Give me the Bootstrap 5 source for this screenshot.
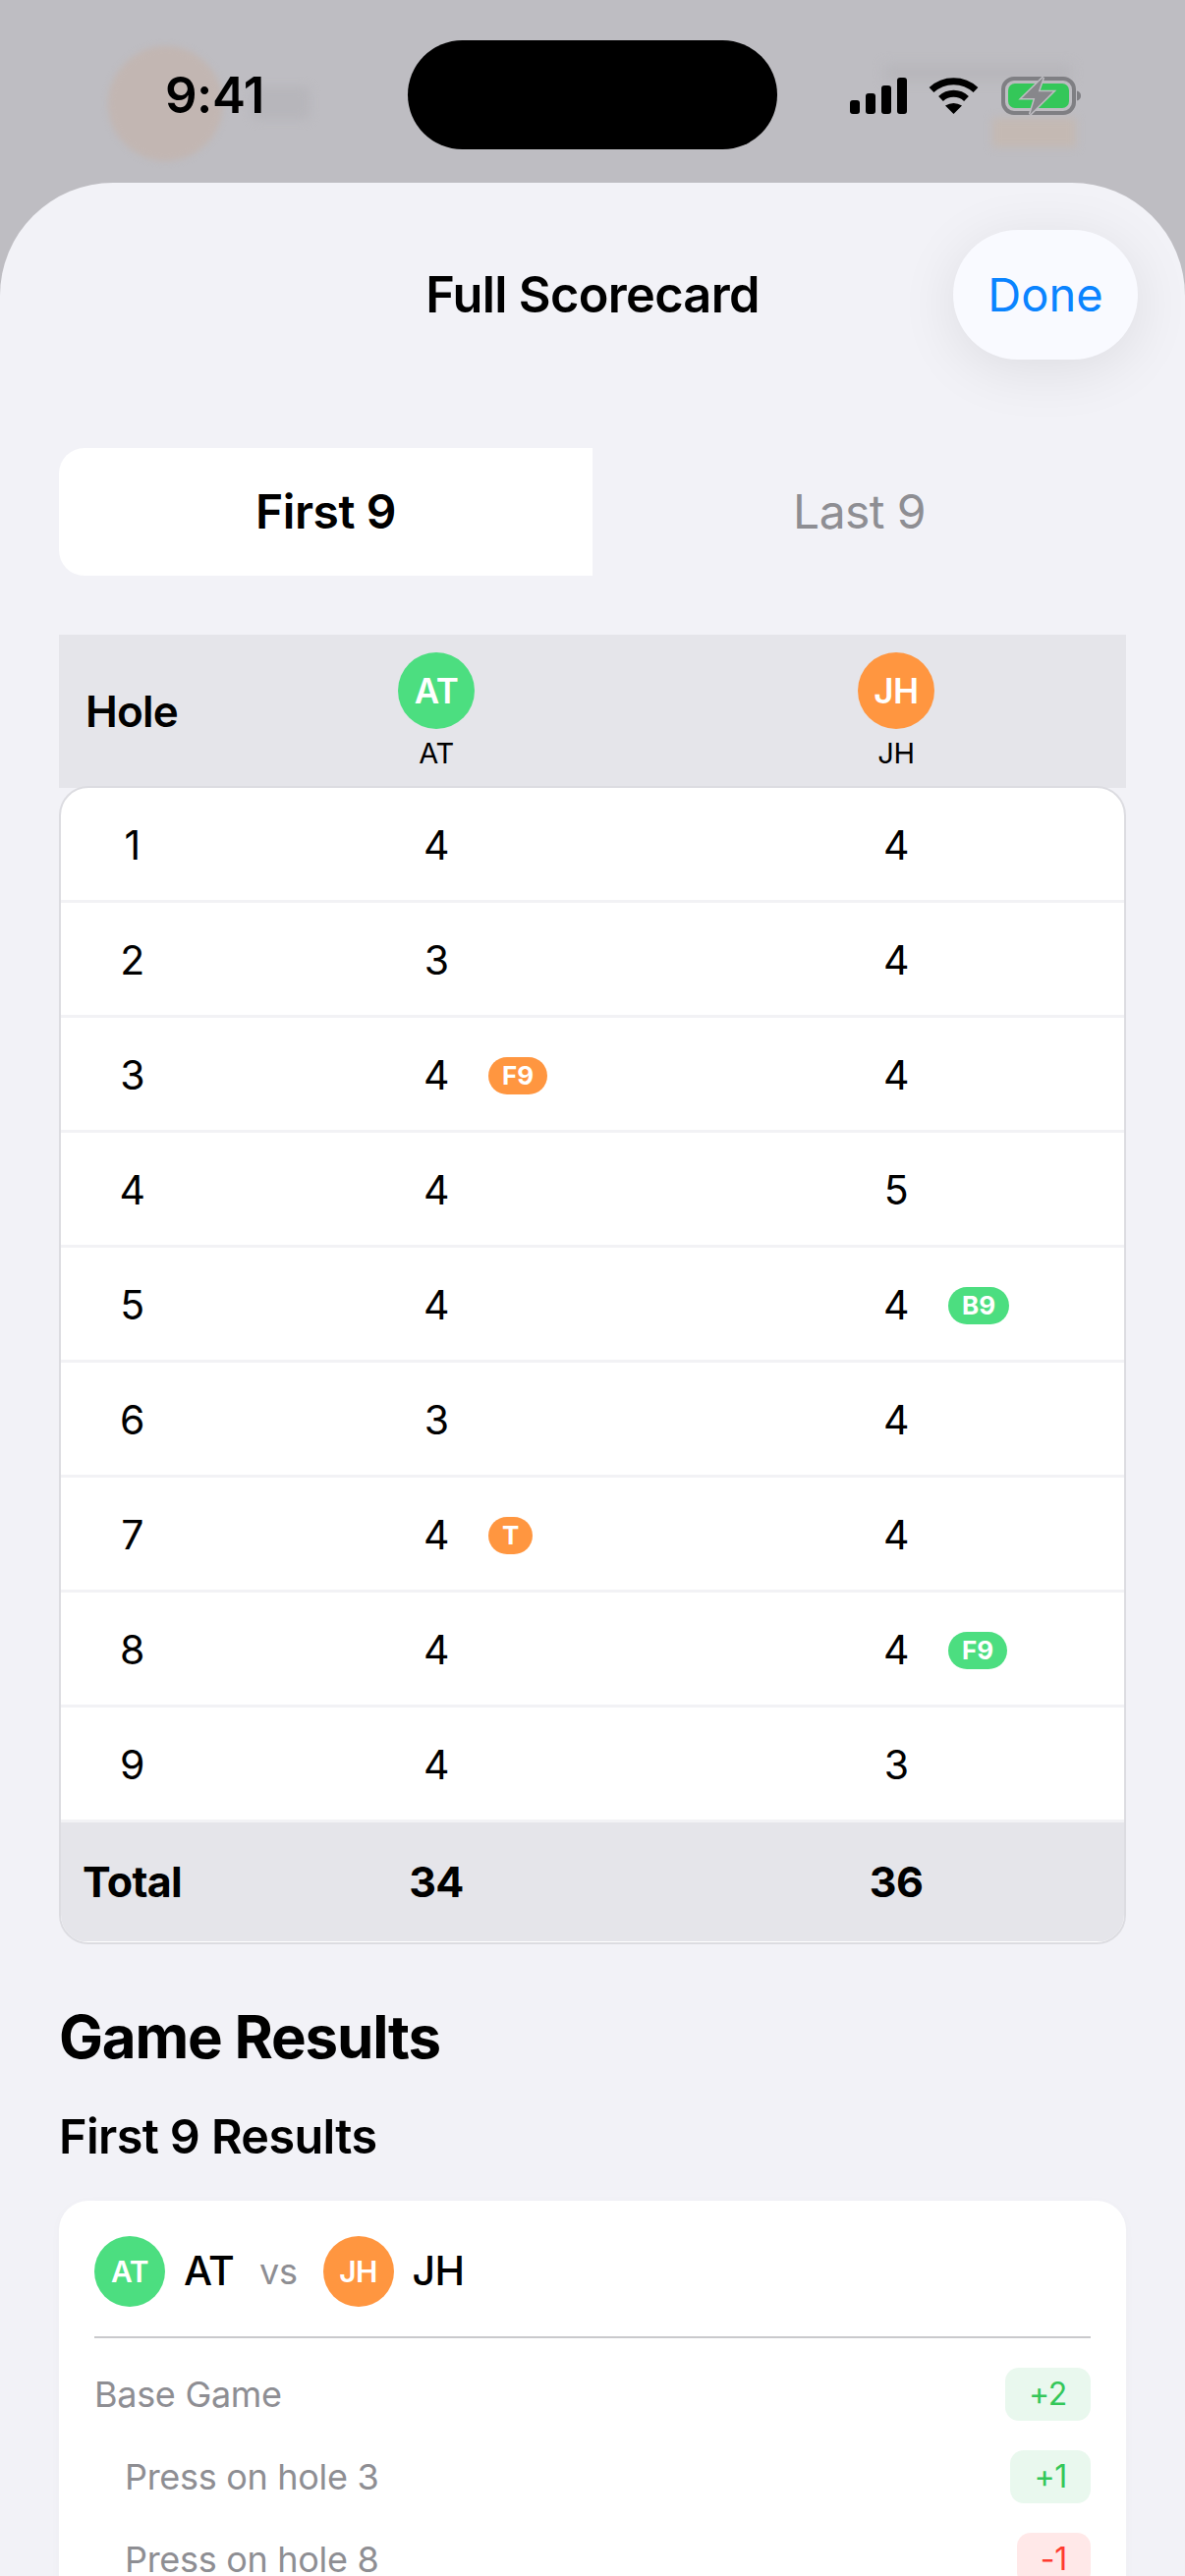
<!DOCTYPE html>
<html lang="en">
<head>
<meta charset="utf-8">
<title>Full Scorecard</title>
<link href="https://cdn.jsdelivr.net/npm/bootstrap@5.3.0/dist/css/bootstrap.min.css" rel="stylesheet">
<style>
html,body{height:2622px;overflow:hidden;background:#bebdc2;font-family:"Inter","Liberation Sans",sans-serif;color:#000}
.screen{width:1206px;height:2622px;overflow:hidden;position:relative}
.ghost{position:absolute;filter:blur(3px)}
.ghost-av{left:110px;top:47px;width:117px;height:117px;border-radius:50%;background:#c2b6b2}
.ghost-txt{left:256px;top:88px;width:60px;height:34px;background:#b7b6bb;border-radius:8px;filter:blur(5px)}
.ghost-top{left:900px;top:66px;width:190px;height:16px;background:#b7b6bb;filter:blur(6px)}
.ghost-sub{left:1010px;top:120px;width:85px;height:30px;background:#c4b9b3;filter:blur(4px)}
.status{height:186px;position:relative;z-index:1}
.time{width:415px;padding-left:168px;padding-top:72px;font-size:51px;line-height:50px;font-weight:600;letter-spacing:-.5px}
.island{width:376px;height:111px;margin-top:41px;background:#000;border-radius:56px}
.icons{padding-left:69px;padding-top:78px}
.sheet{background:#f2f2f7;height:2436px;border-radius:115px 115px 0 0;position:relative;z-index:1}
.sheet-head{display:grid;grid-template-columns:1fr auto 1fr;align-items:center;height:132px;padding-top:48px;box-sizing:content-box}
.sheet-title{font-size:50.5px;line-height:60px;font-weight:600;letter-spacing:-.7px}
.done{justify-self:end;margin-right:48px;width:188px;height:132px;border-radius:66px;background:#f9faff;border:0;color:#0a84ff;font-size:47px;padding:0;box-shadow:0 10px 60px rgba(0,0,0,.09)}
.done:hover,.done:active{background:#f9faff;color:#0a84ff}
.tabs{margin:90px 60px 0;height:130px}
.tab-on,.tab-off{flex:1 1 0;display:flex;align-items:center;justify-content:center;font-size:48px}
.tab-on{background:#fff;font-weight:600;border-radius:26px 0 0 26px;letter-spacing:-.4px}
.tab-off{color:#8e8e93;letter-spacing:-.6px}
.score-grid{display:grid;grid-template-columns:150px 1fr 1fr;align-items:center;text-align:center}
.score-head{margin:60px 60px 0;height:156px;background:#e5e5ea}
.hole-label{font-size:44px;font-weight:600;letter-spacing:-.8px;margin-left:-2px}
.player{display:flex;flex-direction:column;align-items:center}
.avatar{display:flex;align-items:center;justify-content:center;border-radius:50%;color:#fff;font-weight:600;flex:none}
.av-lg{width:78px;height:78px;font-size:35px;letter-spacing:-.5px}
.av-sm{width:72px;height:72px;font-size:30px;letter-spacing:-.5px}
.av-green{background:#4cde80}
.av-orange{background:#ff9640}
.player-name{font-size:29px;line-height:34px;margin-top:8px;letter-spacing:-.3px}
.score-card{margin:-2px 60px 0;height:1179px;background:#fff;border:2px solid #dcdce1;border-radius:30px;overflow:hidden}
.score-card .score-grid{grid-template-columns:148px 468px 1fr}
.score-row{height:117px;padding-top:3px;border-bottom:3px solid #f2f2f5;font-size:41px;letter-spacing:-.6px}
.hole-num{margin-left:-3px}
.cell{display:grid;grid-template-columns:1fr auto 1fr;align-items:center}
.cell-right{padding-left:2px}
.tag{justify-self:start;margin-left:40px;height:38px;padding:0 14px;border-radius:19px;color:#fff;font-size:26px;font-weight:700;line-height:38px;letter-spacing:0}
.tag-o{background:#ff9640}
.tag-g{background:#4cde80}
.total-row{height:121px;background:#e5e5ea;font-size:43px;font-weight:700;letter-spacing:-.7px}
.total-row .total-label{margin-left:-3px}
.h-results{margin:64px 0 0 60px;font-size:60px;line-height:60px;font-weight:700;letter-spacing:-1.2px}
.h-sub{margin:47px 0 0 60px;font-size:48.5px;line-height:50px;font-weight:600;letter-spacing:-.6px}
.result-card{margin:40px 60px 0;padding:36px;background:#fff;border:0;border-radius:30px;box-shadow:0 2px 12px rgba(0,0,0,.025)}
.vs-row{padding-bottom:30px;border-bottom:2px solid #c9c9cc;margin-bottom:30px}
.vs-name{font-size:41px;font-weight:500;margin-left:19px;letter-spacing:-.6px}
.vs-word{font-size:36px;color:#8e8e93;margin:0 26px;letter-spacing:-.4px}
.res-row{height:54px;margin-bottom:30px;font-size:36px;color:#8e8e93;letter-spacing:-.3px}
.res-indent{padding-left:31px}
.pill{height:54px;line-height:54px;padding:0 24px;border-radius:14px;font-size:32px;letter-spacing:-.3px}
.pill-pos{background:#e9f8ee;color:#34c759}
.pill-neg{background:#ffe8e8;color:#ff3b30}
</style>
</head>
<body>
<div class="screen">
  <div class="ghost ghost-av"></div>
  <div class="ghost ghost-txt"></div>
  <div class="ghost ghost-top"></div>
  <div class="ghost ghost-sub"></div>

  <div class="status d-flex">
    <div class="time">9:41</div>
    <div class="island"></div>
    <div class="icons">
      <svg width="245" height="40" viewBox="0 0 245 40" aria-hidden="true">
        <rect x="5" y="24" width="10" height="14" rx="3"/>
        <rect x="21" y="17" width="10" height="21" rx="3"/>
        <rect x="37" y="9" width="10" height="29" rx="3"/>
        <rect x="53" y="1" width="10" height="37" rx="3"/>
        <path d="M88 13.5A33 33 0 0 1 133 13.5" fill="none" stroke="#000" stroke-width="7"/>
        <path d="M97.5 22.5A19 19 0 0 1 123.5 22.5" fill="none" stroke="#000" stroke-width="7"/>
        <path d="M102 29.5Q110.5 24.5 119 29.5L110.5 38Z"/>
        <rect x="161" y="2" width="72" height="35" rx="11" fill="none" stroke="#7f7f83" stroke-width="4"/>
        <rect x="166" y="7" width="62" height="25" rx="7" fill="#34c759"/>
        <path d="M236 14.5C239 15.5 240 17 240 19.5C240 22 239 23.5 236 24.5Z" fill="#7f7f83"/>
        <path d="M201.7 .8L180 22H193.3L188.3 38.4L211.7 15.3H196.7Z" fill="#87878b" stroke="#bebdc2" stroke-width="3" paint-order="stroke"/>
      </svg>
    </div>
  </div>

  <div class="sheet">
    <div class="sheet-head">
      <div></div>
      <div class="sheet-title">Full Scorecard</div>
      <button type="button" class="btn done">Done</button>
    </div>

    <div class="tabs d-flex">
      <div class="tab-on">First 9</div>
      <div class="tab-off">Last 9</div>
    </div>

    <div class="score-grid score-head">
      <div class="hole-label">Hole</div>
      <div class="player"><div class="avatar av-lg av-green">AT</div><div class="player-name">AT</div></div>
      <div class="player"><div class="avatar av-lg av-orange">JH</div><div class="player-name">JH</div></div>
    </div>

    <div class="score-card">
      <div class="score-grid score-row"><div class="hole-num">1</div><div class="cell"><span></span><span>4</span></div><div class="cell cell-right"><span></span><span>4</span></div></div>
      <div class="score-grid score-row"><div class="hole-num">2</div><div class="cell"><span></span><span>3</span></div><div class="cell cell-right"><span></span><span>4</span></div></div>
      <div class="score-grid score-row"><div class="hole-num">3</div><div class="cell"><span></span><span>4</span><span class="tag tag-o">F9</span></div><div class="cell cell-right"><span></span><span>4</span></div></div>
      <div class="score-grid score-row"><div class="hole-num">4</div><div class="cell"><span></span><span>4</span></div><div class="cell cell-right"><span></span><span>5</span></div></div>
      <div class="score-grid score-row"><div class="hole-num">5</div><div class="cell"><span></span><span>4</span></div><div class="cell cell-right"><span></span><span>4</span><span class="tag tag-g">B9</span></div></div>
      <div class="score-grid score-row"><div class="hole-num">6</div><div class="cell"><span></span><span>3</span></div><div class="cell cell-right"><span></span><span>4</span></div></div>
      <div class="score-grid score-row"><div class="hole-num">7</div><div class="cell"><span></span><span>4</span><span class="tag tag-o">T</span></div><div class="cell cell-right"><span></span><span>4</span></div></div>
      <div class="score-grid score-row"><div class="hole-num">8</div><div class="cell"><span></span><span>4</span></div><div class="cell cell-right"><span></span><span>4</span><span class="tag tag-g">F9</span></div></div>
      <div class="score-grid score-row"><div class="hole-num">9</div><div class="cell"><span></span><span>4</span></div><div class="cell cell-right"><span></span><span>3</span></div></div>
      <div class="score-grid total-row"><div class="total-label">Total</div><div>34</div><div class="cell-right">36</div></div>
    </div>

    <h2 class="h-results">Game Results</h2>
    <h3 class="h-sub">First 9 Results</h3>

    <div class="card result-card">
      <div class="vs-row d-flex align-items-center">
        <div class="avatar av-sm av-green">AT</div><span class="vs-name">AT</span>
        <span class="vs-word">vs</span>
        <div class="avatar av-sm av-orange">JH</div><span class="vs-name">JH</span>
      </div>
      <div class="res-row d-flex justify-content-between align-items-center"><span>Base Game</span><span class="pill pill-pos">+2</span></div>
      <div class="res-row d-flex justify-content-between align-items-center"><span class="res-indent">Press on hole 3</span><span class="pill pill-pos">+1</span></div>
      <div class="res-row d-flex justify-content-between align-items-center"><span class="res-indent">Press on hole 8</span><span class="pill pill-neg">-1</span></div>
    </div>
  </div>
</div>
<script src="https://cdn.jsdelivr.net/npm/bootstrap@5.3.0/dist/js/bootstrap.bundle.min.js"></script>
</body>
</html>
